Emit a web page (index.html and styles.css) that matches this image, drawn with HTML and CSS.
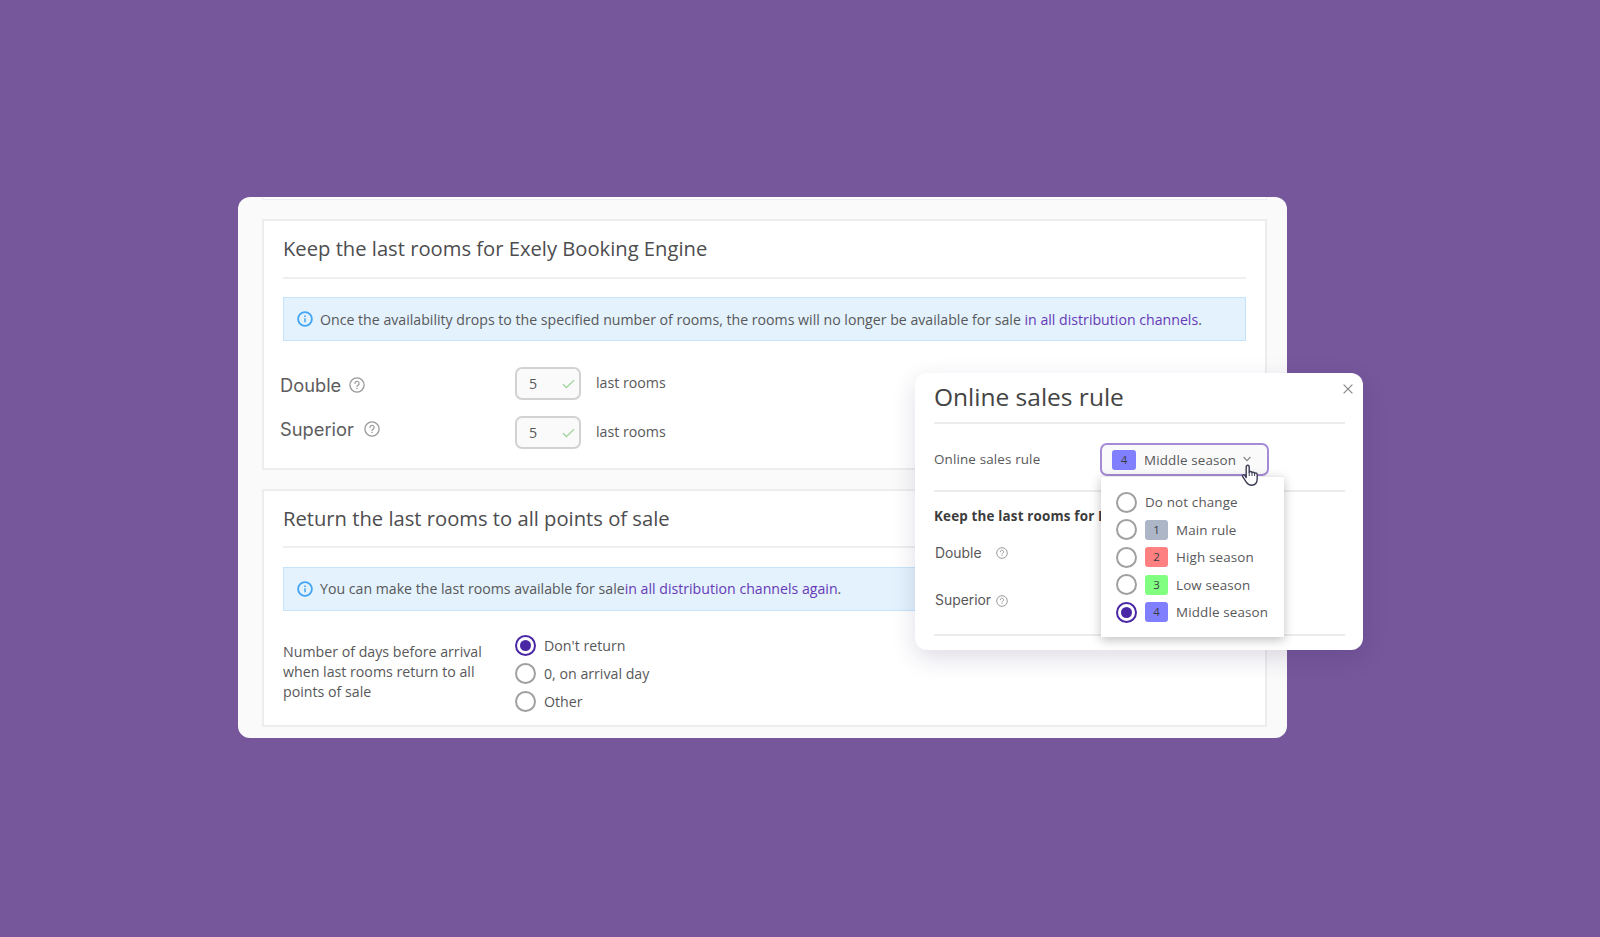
FILE: index.html
```html
<!DOCTYPE html>
<html lang="en">
<head>
    <meta charset="UTF-8">
    <meta name="viewport" content="width=device-width, initial-scale=1.0">
    <title>Online sales rule</title>
    <link rel="stylesheet" href="styles.css">
</head>
<body>
    <!-- Shared icons -->
    <svg width="0" height="0" class="icon-defs">
        <symbol id="icon-help" viewBox="0 0 16 16">
            <circle cx="8" cy="8" r="7.1" fill="none" stroke="currentColor" stroke-width="1.3"/>
            <path d="M5.9 6.4a2.1 2.1 0 1 1 3.1 1.8c-.7.4-1 .7-1 1.4" fill="none" stroke="currentColor" stroke-width="1.2" stroke-linecap="round"/>
            <circle cx="8" cy="11.4" r=".75" fill="currentColor"/>
        </symbol>
        <symbol id="icon-info" viewBox="0 0 16 16">
            <circle cx="8" cy="8" r="6.9" fill="none" stroke="currentColor" stroke-width="1.8"/>
            <path d="M8 7.2v4" stroke="currentColor" stroke-width="1.5"/>
            <circle cx="8" cy="5.2" r=".9" fill="currentColor"/>
        </symbol>
        <symbol id="icon-check" viewBox="0 0 14 10">
            <path d="M1 5.2l3.8 3.6L13 1" fill="none" stroke="currentColor" stroke-width="1.5"/>
        </symbol>
    </svg>

    <div class="panel">
        <div class="card card-previous"></div>

        <div class="card card-keep">
            <h2>Keep the last rooms for Exely Booking Engine</h2>
            <div class="alert">
                <svg class="info"><use href="#icon-info"/></svg>
                <p>Once the availability drops to the specified number of rooms, the rooms will no longer be available for sale <a>in all distribution channels</a>.</p>
            </div>
            <div class="rooms">
                <div class="room-names">
                    <div class="room-name">Double <svg class="help"><use href="#icon-help"/></svg></div>
                    <div class="room-name superior">Superior <svg class="help"><use href="#icon-help"/></svg></div>
                </div>
                <div class="room-limits">
                    <div class="room-limit">
                        <div class="number">5 <svg class="check"><use href="#icon-check"/></svg></div>
                        <span>last rooms</span>
                    </div>
                    <div class="room-limit">
                        <div class="number">5 <svg class="check"><use href="#icon-check"/></svg></div>
                        <span>last rooms</span>
                    </div>
                </div>
            </div>
        </div>

        <div class="card card-return">
            <h2>Return the last rooms to all points of sale</h2>
            <div class="alert alert-return">
                <svg class="info"><use href="#icon-info"/></svg>
                <p>You can make the last rooms available for sale<a>in all distribution channels again</a>.</p>
            </div>
            <div class="days">
                <div class="days-label">Number of days before arrival<br>when last rooms return to all<br>points of sale</div>
                <div class="days-options">
                    <div class="option"><i class="radio checked"></i>Don't return</div>
                    <div class="option"><i class="radio"></i>0, on arrival day</div>
                    <div class="option"><i class="radio"></i>Other</div>
                </div>
            </div>
        </div>
    </div>

    <div class="modal">
        <svg class="close" viewBox="0 0 10 10"><path d="M.6.6l8.8 8.8M9.4.6L.6 9.4" stroke="currentColor" stroke-width="1.2"/></svg>
        <h1>Online sales rule</h1>
        <div class="rule-row">
            <span class="rule-label">Online sales rule</span>
            <div class="select">
                <b class="badge blue">4</b>
                <span>Middle season</span>
                <svg class="chevron" viewBox="0 0 8 6"><path d="M.6 1L4 4.6 7.4 1" fill="none" stroke="currentColor" stroke-width="1.2"/></svg>
            </div>
        </div>
        <div class="modal-rooms">
            <h3>Keep the last rooms for Exely</h3>
            <div class="modal-room"><span>Double</span><svg class="help"><use href="#icon-help"/></svg></div>
            <div class="modal-room"><span>Superior</span><svg class="help"><use href="#icon-help"/></svg></div>
        </div>

        <div class="menu">
            <div class="menu-item"><i class="radio"></i><span>Do not change</span></div>
            <div class="menu-item"><i class="radio"></i><b class="badge gray">1</b><span>Main rule</span></div>
            <div class="menu-item"><i class="radio"></i><b class="badge red">2</b><span>High season</span></div>
            <div class="menu-item"><i class="radio"></i><b class="badge green">3</b><span>Low season</span></div>
            <div class="menu-item"><i class="radio checked"></i><b class="badge blue">4</b><span>Middle season</span></div>
        </div>

        <svg class="cursor" viewBox="0 0 18 23">
            <path d="M5.2 13.6V2.8a1.5 1.5 0 0 1 3 0v5.4c.5-1 2.5-.9 2.8.4.7-.8 2.3-.5 2.6.7 1-.7 2.6-.1 2.6 1.4v4.1c0 3.8-2 6.4-5.6 6.4-2.7 0-4-1-5.3-3.1l-3.6-5.4c-.9-1.4.8-2.6 2-1.5z" fill="#fff" stroke="#3b3b55" stroke-width="1.4" stroke-linejoin="round"/>
            <path d="M8.2 8v4M11 8.8V12M13.6 9.5V12" fill="none" stroke="#3b3b55" stroke-width="1"/>
        </svg>
    </div>
</body>
</html>
```
FILE: styles.css
```css
* { box-sizing: border-box; }
body { margin: 0; height: 937px; padding: 197px 0 0 238px; position: relative; overflow: hidden; background: #76579c; font-family: "Open Sans", sans-serif; font-size: 14.2px; color: #58585a; }
h1, h2, h3, p { margin: 0; font-weight: 400; }
svg { display: block; flex: none; }
a { color: #673ab7; }
.icon-defs { position: absolute; }

/* Settings panel */
.panel { width: 1049px; height: 541px; padding: 0 20px 0 24px; border-radius: 12px; background: #fafafa; overflow: hidden; }
.card { padding: 0 19px; border: 2px solid #ededed; background: #fff; }
.card-previous { height: 3px; margin-bottom: 19px; border-width: 0 1px 1px; }
.card-keep { height: 251px; margin-bottom: 19px; }
.card-return { height: 238px; }
.card h2 { height: 58px; padding-top: 13px; border-bottom: 2px solid #efefef; font-size: 20.2px; line-height: 28px; color: #4d4d4f; white-space: nowrap; }
.card-return h2 { height: 57px; }
.alert { display: flex; align-items: center; height: 44px; margin-top: 18px; padding-left: 13px; border: 1px solid #c5e4fb; background: #e3f2fd; white-space: nowrap; }
.alert p { font-size: 14.15px; }
.alert-return { margin-top: 19px; }
.alert-return p { margin-top: -1px; }
.info { width: 16px; height: 16px; margin-right: 7px; color: #42a5f5; }

.rooms { display: flex; padding-top: 26px; }
.room-names { width: 235px; margin: -1px 0 0 -3px; }
.room-name { display: flex; align-items: center; gap: 8px; height: 37px; margin-bottom: 7px; font-family: Inter, sans-serif; font-size: 18.3px; color: #5c5c5e; }
.room-name.superior { gap: 10px; }
.help { width: 16px; height: 16px; color: #999; }
.room-limit { display: flex; align-items: center; gap: 15px; margin-bottom: 16px; }
.room-limit span { margin-top: -2px; }
.number { display: flex; align-items: center; justify-content: space-between; width: 66px; height: 33px; padding: 0 4px 0 12px; border: 2px solid #d2d2d2; border-radius: 7px; background: #fafafa; }
.check { width: 13px; height: 10px; color: #a5d6a0; }

.days { display: flex; padding-top: 24px; }
.days-label { width: 232px; padding-top: 7px; line-height: 20.2px; }
.option { display: flex; align-items: center; gap: 8px; height: 20px; margin-bottom: 8.3px; }
.radio { flex: none; display: flex; align-items: center; justify-content: center; width: 21px; height: 21px; border: 2px solid #a0a0a0; border-radius: 50%; background: #fff; }
.radio.checked { border-color: #4a27a4; }
.radio.checked::after { content: ""; width: 11px; height: 11px; border-radius: 50%; background: #4a27a4; }

/* Modal over the panel */
.modal { position: absolute; left: 915px; top: 373px; width: 448px; height: 277px; padding: 0 18px 0 19px; border-radius: 12px; background: #fff; box-shadow: 0 8px 24px rgba(40, 20, 80, 0.15); font-size: 13.4px; }
.close { position: absolute; right: 10px; top: 11px; width: 10px; height: 10px; color: #888; }
.modal h1 { height: 51px; padding-top: 7px; border-bottom: 2px solid #ececec; font-size: 24.5px; line-height: 34px; color: #444; }
.rule-row { display: flex; align-items: center; height: 68px; border-bottom: 2px solid #ececec; letter-spacing: 0.15px; }
.rule-label { width: 166px; margin-top: 4px; }
.select { display: flex; align-items: center; width: 169px; height: 33px; margin-top: 5px; padding-left: 10px; border: 2px solid #a58bd6; border-radius: 7px; background: #fafafa; }
.select .badge { margin-right: 8px; }
.badge { flex: none; width: 24px; height: 20px; border-radius: 3px; font-size: 11.5px; font-weight: 400; line-height: 19px; text-align: center; color: #3c3c46; }
.gray { background: #adb6c6; }
.red { background: #ff8080; }
.green { background: #80ff80; }
.blue { background: #8080ff; }
.chevron { width: 8px; height: 6px; margin: -1px 0 0 7px; color: #888; }
.modal-rooms { height: 144px; padding-top: 14px; border-bottom: 2px solid #ececec; }
.modal h3 { height: 37px; font-weight: 700; font-size: 13.4px; line-height: 20px; letter-spacing: 0.18px; color: #3c3c3c; white-space: nowrap; }
.modal-room { display: flex; align-items: center; height: 20px; margin-bottom: 27.5px; font-family: Inter, sans-serif; font-size: 13.9px; }
.modal-room span { width: 62px; padding-left: 1px; margin-top: -1px; }
.modal-room .help { width: 12px; height: 12px; }

.menu { position: absolute; left: 186px; top: 103px; width: 183px; height: 161px; padding: 15px 0 0 15px; border-top: 1px solid #ececec; background: #fff; box-shadow: 0 3px 10px rgba(0, 0, 0, 0.25); letter-spacing: 0.15px; }
.menu-item { display: flex; align-items: center; gap: 8px; height: 20px; margin-bottom: 7.5px; white-space: nowrap; }
.menu-item .badge { width: 23px; }
.cursor { position: absolute; left: 326px; top: 91px; width: 18px; height: 23px; }
```
